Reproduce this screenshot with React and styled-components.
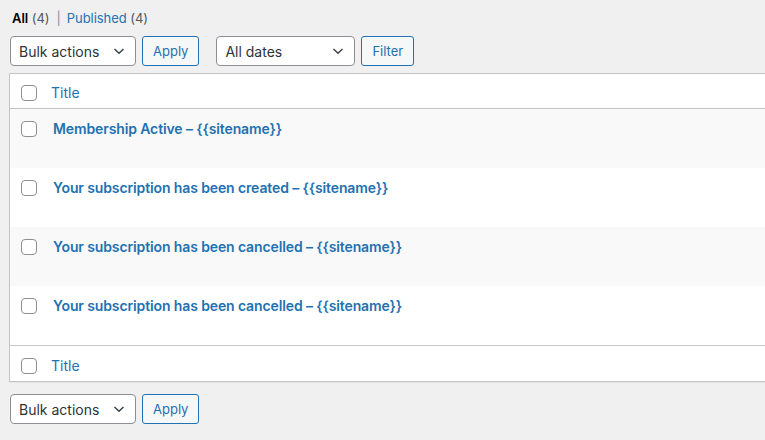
import React from "react";
import styled, { createGlobalStyle } from "styled-components";

const Global = createGlobalStyle`
  html, body { margin: 0; padding: 0; background: #f0f0f1; overflow: hidden; }
  body { font-family: Inter, "Noto Sans", "Liberation Sans", sans-serif; font-size: 13px; color: #3c434a; }
  * { box-sizing: border-box; }
`;

const Wrap = styled.div`
  padding: 8px 0 0 10px;
  width: 800px;
`;

const SubNav = styled.ul`
  list-style: none;
  margin: 0;
  padding: 0 0 0 2px;
  display: flex;
  align-items: center;
  height: 20px;
  font-size: 13px;
  line-height: 20px;
  letter-spacing: -0.05px;
`;

const SubItem = styled.li`
  color: #50575e;
  white-space: pre;
`;

const Current = styled.span`
  color: #000;
  font-weight: 600;
`;

const Link = styled.a`
  color: #2271b1;
  text-decoration: none;
`;

const Sep = styled.span`
  color: #8c8f94;
  margin: 0 6px 0 7px;
`;

const TableNav = styled.div`
  display: flex;
  align-items: center;
  height: 30px;
  margin: ${(p) => p.$margin};
`;

const SelectBox = styled.div`
  width: ${(p) => p.$w}px;
  height: 30px;
  border: 1px solid #8c8f94;
  border-radius: 4px;
  background: #fff;
  color: #2c3338;
  font-size: 14px;
  display: flex;
  align-items: center;
  justify-content: space-between;
  padding: 0 8px;
  margin-right: ${(p) => p.$mr}px;
`;

const Button = styled.button`
  height: 30px;
  padding: 0 10px;
  border: 1px solid #2271b1;
  border-radius: 3px;
  background: #f6f7f7;
  color: #2271b1;
  font-family: inherit;
  font-size: 13px;
  margin-right: ${(p) => p.$mr || 0}px;
`;

const Table = styled.div`
  margin-left: -1px;
  border: 1px solid #c3c4c7;
  border-right: none;
  background: #fff;
  box-shadow: 0 1px 1px rgba(0, 0, 0, 0.04);
`;

const HeadRow = styled.div`
  display: flex;
  align-items: center;
  height: ${(p) => (p.$foot ? 36 : 35)}px;
  padding: ${(p) => (p.$foot ? 4 : 3)}px 0 0 11px;
  border-bottom: ${(p) => (p.$foot ? "none" : "1px solid #c3c4c7")};
  border-top: ${(p) => (p.$foot ? "1px solid #c3c4c7" : "none")};
`;

const Row = styled.div`
  display: flex;
  align-items: flex-start;
  height: 59px;
  background: ${(p) => (p.$alt ? "#f9f9f9" : "#fff")};
  padding: 12px 0 0 11px;
`;

const Check = styled.span`
  display: inline-block;
  width: 16px;
  height: 16px;
  border: 1px solid #8c8f94;
  border-radius: 4px;
  background: #fff;
  flex: none;
`;

const HeadTitle = styled.a`
  color: #2271b1;
  font-size: 14px;
  margin-left: 14px;
  text-decoration: none;
  line-height: 16px;
`;

const RowTitle = styled.a`
  color: #2271b1;
  font-size: 14px;
  font-weight: 600;
  letter-spacing: -0.12px;
  margin-left: 16px;
  text-decoration: none;
  line-height: 16px;
`;

const Chevron = () => (
  <svg width="16" height="16" viewBox="0 0 16 16" aria-hidden="true">
    <path d="M3.5 6 L8 10.3 L12.5 6" fill="none" stroke="#3c434a" strokeWidth="1.5" />
  </svg>
);

const rows = [
  "Membership Active – {{sitename}}",
  "Your subscription has been created – {{sitename}}",
  "Your subscription has been cancelled – {{sitename}}",
  "Your subscription has been cancelled – {{sitename}}",
];

export default function App() {
  return (
    <>
      <Global />
      <Wrap>
        <SubNav>
          <SubItem>
            <Current>All</Current> (4)
          </SubItem>
          <Sep>|</Sep>
          <SubItem>
            <Link href="#">Published</Link> (4)
          </SubItem>
        </SubNav>
        <TableNav $margin="8px 0 7px 0">
          <SelectBox $w={126} $mr={6}>
            <span>Bulk actions</span>
            <Chevron />
          </SelectBox>
          <Button $mr={17}>Apply</Button>
          <SelectBox $w={139} $mr={6}>
            <span>All dates</span>
            <Chevron />
          </SelectBox>
          <Button>Filter</Button>
        </TableNav>
        <Table>
          <HeadRow>
            <Check />
            <HeadTitle href="#">Title</HeadTitle>
          </HeadRow>
          {rows.map((t, i) => (
            <Row key={i} $alt={i % 2 === 0}>
              <Check />
              <RowTitle href="#">{t}</RowTitle>
            </Row>
          ))}
          <HeadRow $foot>
            <Check />
            <HeadTitle href="#">Title</HeadTitle>
          </HeadRow>
        </Table>
        <TableNav $margin="12px 0 0 0">
          <SelectBox $w={126} $mr={6}>
            <span>Bulk actions</span>
            <Chevron />
          </SelectBox>
          <Button>Apply</Button>
        </TableNav>
      </Wrap>
    </>
  );
}
